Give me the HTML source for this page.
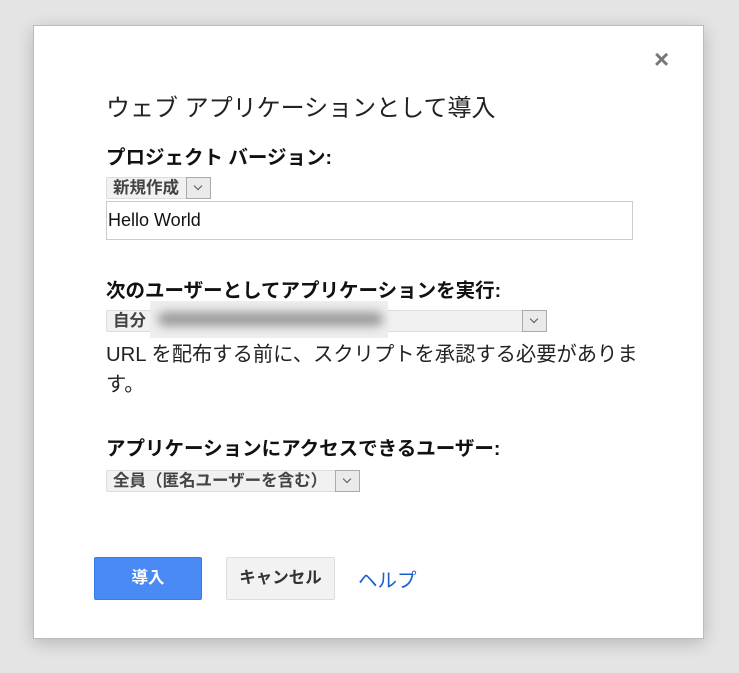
<!DOCTYPE html>
<html><head><meta charset="utf-8"><style>
body{margin:0;width:739px;height:673px;background:#e4e4e4;position:relative;overflow:hidden;font-family:"Liberation Sans","Noto Sans CJK JP",sans-serif;color:#222}
.dlg{position:absolute;left:33px;top:25px;width:669px;height:612px;background:#fff;border:1px solid #bbb;box-shadow:0 4px 16px rgba(0,0,0,.2)}
.a{position:absolute;white-space:nowrap}
.h{font-size:19.5px;font-weight:bold;color:#111}
.sel{position:absolute;height:22px;background:#f1f1f1;border:1px solid #ddd;border-radius:2px;box-sizing:border-box;font-size:16.5px;font-weight:bold;color:#444;line-height:20px;padding-left:6px}
.dd{position:absolute;top:-1px;right:-1px;width:25px;height:22px;box-sizing:border-box;border:1px solid #aaa;background:#eaeaea}
.dd:after{content:"";position:absolute;left:8px;top:5px;width:5px;height:5px;border-right:1px solid #555;border-bottom:1px solid #555;transform:rotate(45deg)}
.btn{position:absolute;height:43px;box-sizing:border-box;border-radius:2px;font-size:16.5px;font-weight:bold;text-align:center;line-height:41px}
</style></head><body>
<div class="dlg"></div>
<div class="a" style="left:654px;top:44px;font-size:26px;color:#777;font-weight:bold">×</div>
<div class="a" style="left:106px;top:88px;font-size:24px;color:#222">ウェブ アプリケーションとして導入</div>
<div class="a h" style="left:106px;top:141px">プロジェクト バージョン:</div>
<div class="sel" style="left:106px;top:177px;width:105px">新規作成<div class="dd"></div></div>
<div class="a" style="left:106px;top:201px;width:527px;height:39px;border:1px solid #ccc;box-sizing:border-box;font-size:18px;line-height:37px;padding-left:1px;color:#111">Hello World</div>
<div class="a h" style="left:106px;top:274px">次のユーザーとしてアプリケーションを実行:</div>
<div class="sel" style="left:106px;top:310px;width:441px">自分<div class="dd"></div></div>
<div class="a" style="left:150px;top:301px;width:238px;height:37px;background:#eee"></div>
<div class="a" style="left:158px;top:312px;width:225px;height:14px;background:#999;filter:blur(5px);border-radius:7px"></div>
<div class="a" style="left:106px;top:340px;font-size:20.3px;line-height:30px;color:#222">URL を配布する前に、スクリプトを承認する必要がありま<br>す。</div>
<div class="a h" style="left:106px;top:432px">アプリケーションにアクセスできるユーザー:</div>
<div class="sel" style="left:106px;top:470px;width:254px">全員（匿名ユーザーを含む）<div class="dd"></div></div>
<div class="btn" style="left:94px;top:557px;width:108px;background:#4a8af4;border:1px solid #3a7ae4;color:#fff">導入</div>
<div class="btn" style="left:226px;top:557px;width:109px;background:#f2f2f2;border:1px solid #ddd;color:#333">キャンセル</div>
<div class="a" style="left:358px;top:564px;font-size:19.5px;color:#1a5fd0">ヘルプ</div>
</body></html>
